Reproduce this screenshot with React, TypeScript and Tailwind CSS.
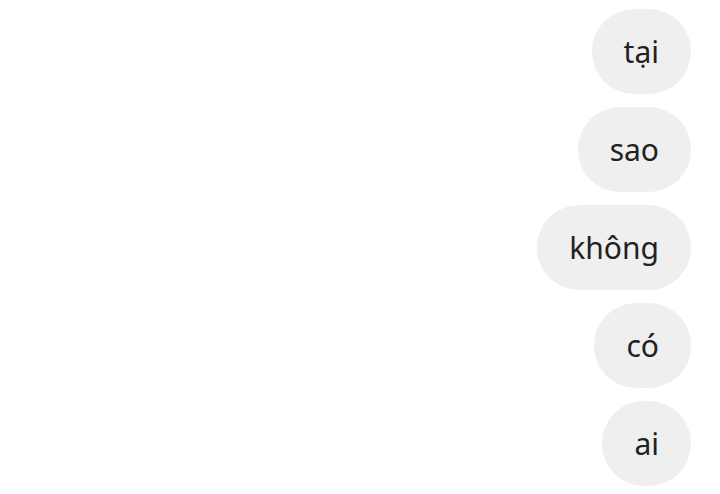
const words = ["tại", "sao", "không", "có", "ai"];

export default function App() {
  return (
    <div className="min-h-screen bg-white pt-[9px] pr-[29px] flex flex-col items-end gap-[13px] font-['Noto_Sans',sans-serif]">
      {words.map((w) => (
        <div
          key={w}
          className="rounded-[42px] bg-[#efefef] px-8 py-5 text-[30px] leading-[45px] text-[#222]"
        >
          {w}
        </div>
      ))}
    </div>
  );
}
